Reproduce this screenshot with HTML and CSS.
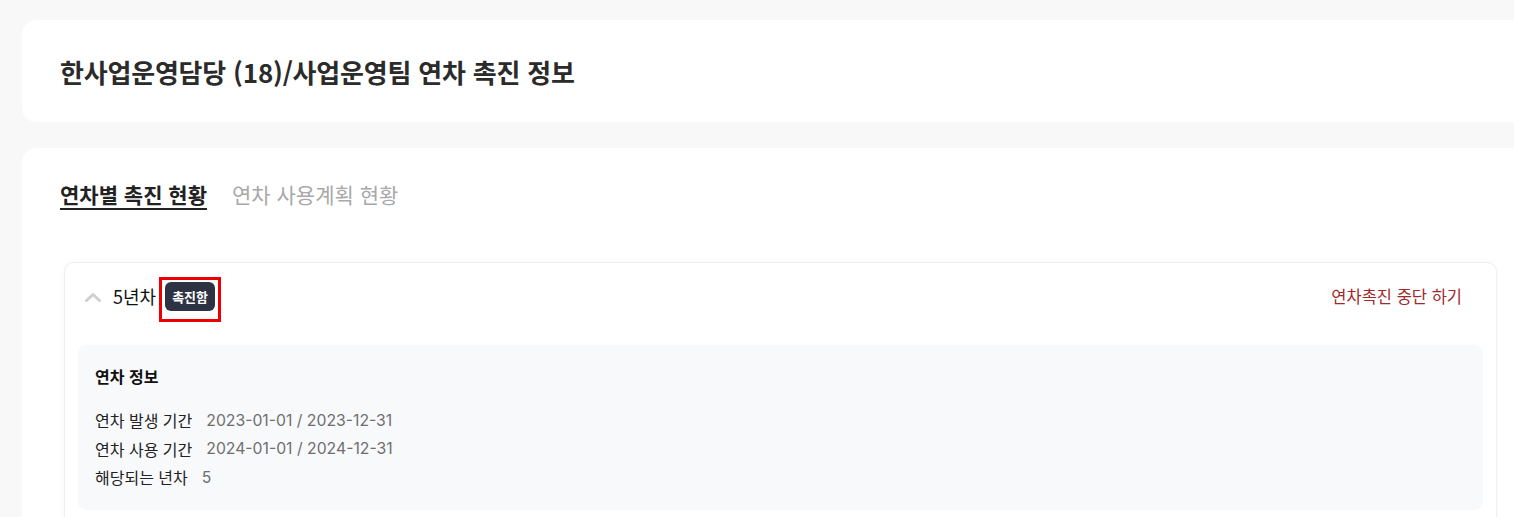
FILE: index.html
```html
<!DOCTYPE html>
<html lang="ko">

<head>
    <meta charset="UTF-8">
    <meta name="viewport" content="width=device-width, initial-scale=1.0">
    <title>연차 촉진 정보</title>
    <link rel="stylesheet" href="styles.css">
</head>

<body>
    <div class="page">
        <div class="card title-card">
            <h1>한사업운영담당 (18)/사업운영팀 연차 촉진 정보</h1>
        </div>

        <div class="card main-card">
            <div class="tabs">
                <div class="tab active-tab">연차별 촉진 현황</div>
                <div class="tab">연차 사용계획 현황</div>
            </div>

            <!-- 연차별 목록 -->
            <div class="year-item">
                <div class="year-head">
                    <div class="year-title">
                        <svg class="chevron" width="16" height="10" viewBox="0 0 16 10">
                            <path d="M1.5 8.5 L8 2.5 L14.5 8.5" fill="none" stroke="#cfcfcf" stroke-width="3" stroke-linecap="round" stroke-linejoin="round"/>
                        </svg>
                        <span class="year-name">5년차</span>
                        <span class="mark">
                            <span class="badge">촉진함</span>
                        </span>
                    </div>
                    <a class="stop-link" href="#">연차촉진 중단 하기</a>
                </div>
                <div class="info-box">
                    <div class="info-title">연차 정보</div>
                    <div class="info-row"><span class="label">연차 발생 기간</span><span class="value">2023-01-01 / 2023-12-31</span></div>
                    <div class="info-row"><span class="label">연차 사용 기간</span><span class="value">2024-01-01 / 2024-12-31</span></div>
                    <div class="info-row"><span class="label">해당되는 년차</span><span class="value">5</span></div>
                </div>
            </div>
        </div>
    </div>
</body>
</html>
```

FILE: styles.css
```css
/* 공통 */
html,
body {
    margin: 0;
    padding: 0;
    overflow: hidden;
}

body {
    font-family: "Noto Sans CJK KR", "Noto Sans", sans-serif;
    background-color: #f8f8f8;
    color: #222;
}

.page {
    width: 1513px;
    padding: 20px 0 0 22px;
}

.card {
    background-color: #fff;
    border-radius: 14px;
}

.title-card {
    height: 102px;
    display: flex;
    align-items: center;
    padding-left: 38px;
    box-sizing: border-box;
    margin-bottom: 26px;
}

h1 {
    margin: 0;
    font-size: 26px;
    font-weight: 700;
    color: #2b2b2b;
    letter-spacing: -0.2px;
}

.main-card {
    padding: 28px 38px 0 38px;
    height: 400px;
}

/* 탭 */
.tabs {
    display: flex;
    gap: 25px;
    margin-bottom: 50px;
}

.tab {
    font-size: 21px;
    font-weight: 400;
    color: #a8a8a8;
    line-height: 36px;
    cursor: pointer;
}

.active-tab {
    color: #222;
    font-weight: 700;
    text-decoration: underline;
    text-underline-offset: 5px;
    text-decoration-thickness: 2px;
}

/* 연차 항목 */
.year-item {
    margin-left: 4px;
    background-color: #fff;
    border: 1px solid #f0f0f0;
    border-radius: 10px;
    box-shadow: 0 0 4px rgba(0, 0, 0, 0.04);
    padding: 14px 13px 0 13px;
    height: 300px;
}

.year-head {
    display: flex;
    justify-content: space-between;
    align-items: flex-start;
    margin-bottom: 23px;
}

.year-title {
    display: flex;
    align-items: flex-start;
}

.chevron {
    margin: 15px 12px 0 7px;
}

.year-name {
    font-size: 18px;
    line-height: 30px;
    margin-top: 4px;
    color: #111;
    margin-right: 3px;
}

.mark {
    border: 3px solid #ee0000;
    padding: 2px 3px 8px 3px;
    display: flex;
}

.badge {
    background-color: #2e3344;
    color: #fff;
    font-size: 13px;
    font-weight: 700;
    padding: 0 7px;
    height: 29px;
    line-height: 29px;
    border-radius: 6px;
}

.stop-link {
    font-size: 16.5px;
    line-height: 30px;
    margin-top: 4px;
    color: #a0292c;
    text-decoration: none;
    margin-right: 21px;
}

.info-box {
    background-color: #f8f9fb;
    border-radius: 8px;
    padding: 19px 17px 18px 17px;
}

.info-title {
    font-size: 16px;
    line-height: 24px;
    font-weight: 700;
    color: #111;
    margin-bottom: 18px;
}

.info-row {
    display: flex;
    align-items: center;
    height: 28.5px;
    font-size: 16px;
}

.label {
    color: #222;
    margin-right: 14px;
}

.value {
    font-family: Inter, "Noto Sans", sans-serif;
    font-size: 15.75px;
    color: #6e6e6e;
}
```
